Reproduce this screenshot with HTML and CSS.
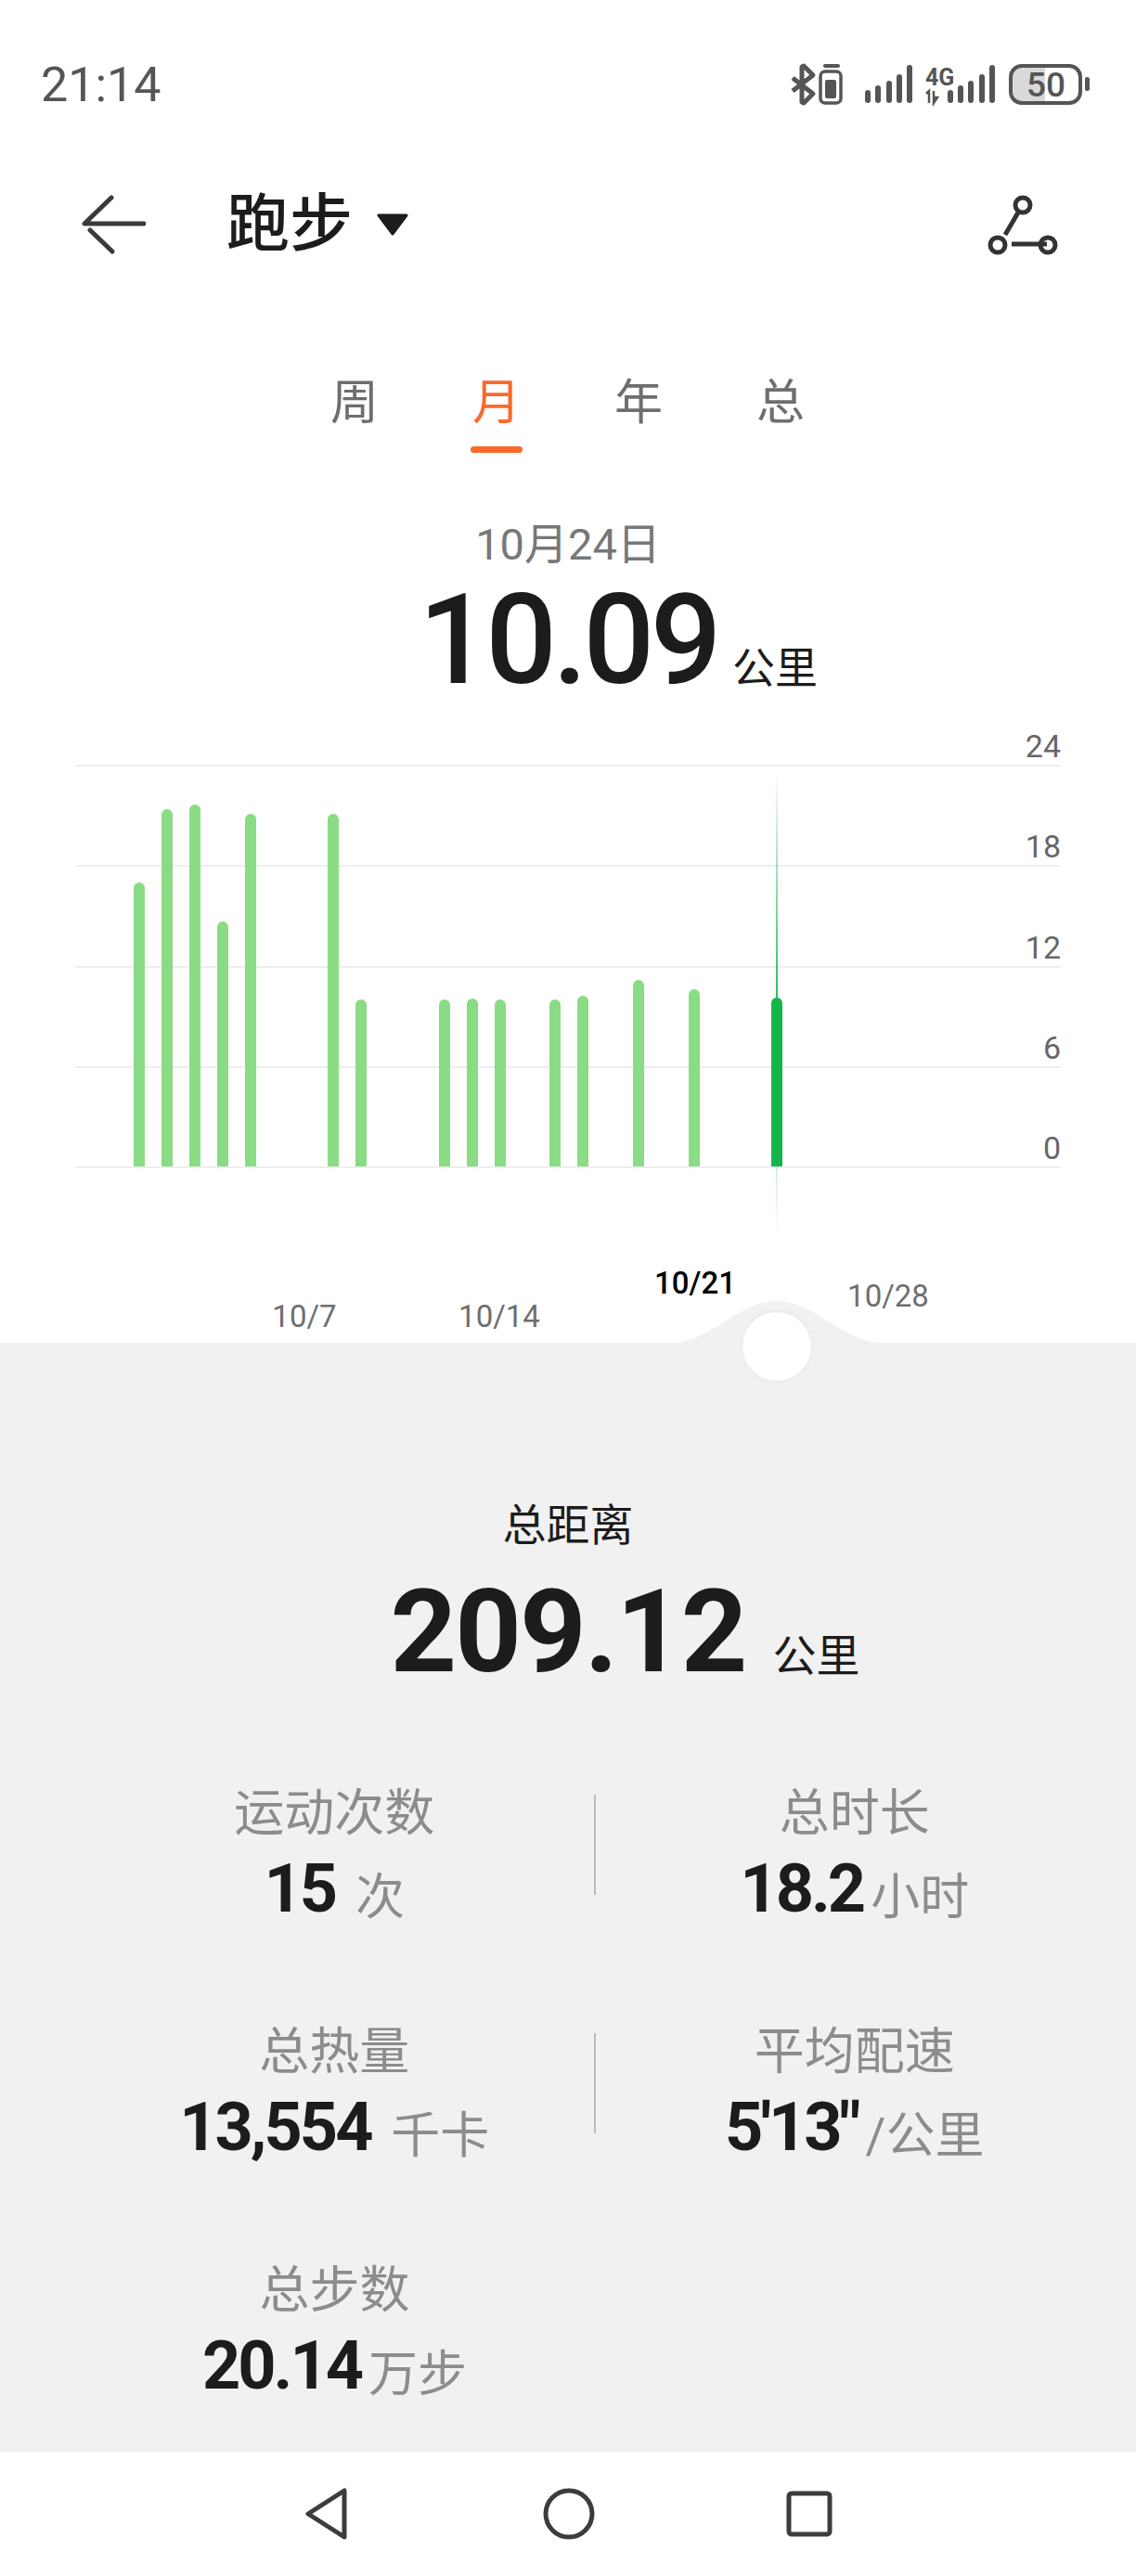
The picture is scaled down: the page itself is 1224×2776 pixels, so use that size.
FILE: index.html
```html
<!DOCTYPE html>
<html lang="zh-CN">
<head>
  <meta charset="UTF-8" />
  <meta name="viewport" content="width=device-width, initial-scale=1" />
  <title>跑步</title>
  <link rel="stylesheet" href="styles.css">
</head>
<body>
  <div class="status-bar">
    <span class="status-time">21:14</span>
    <svg class="status-icons" width="328" height="48" viewBox="0 0 328 48">
      <!-- bluetooth + small battery -->
      <path d="M2 17l22 17-10 10-2-1V5l2-1 10 10L2 31" fill="none" stroke="#555" stroke-width="5" stroke-linejoin="round"/>
      <path d="M37 4h14" stroke="#555" stroke-width="4" stroke-linecap="round"/>
      <rect x="32" y="10" width="22" height="34" rx="5" fill="none" stroke="#555" stroke-width="3.5"/>
      <rect x="37" y="19" width="12" height="20" rx="2" fill="#555"/>
      <!-- signal 1 -->
      <g fill="#555">
        <rect x="80" y="30" width="6" height="14" rx="3"/>
        <rect x="91" y="25" width="6" height="19" rx="3"/>
        <rect x="103" y="20" width="6" height="24" rx="3"/>
        <rect x="114" y="13" width="6" height="31" rx="3"/>
        <rect x="125" y="3" width="6" height="41" rx="3"/>
      </g>
      <!-- signal 2 -->
      <text class="net-label" x="145" y="25">4G</text>
      <path d="M149 44V31l-3 3M154 31v13l4-6h-4" fill="none" stroke="#555" stroke-width="2.5"/>
      <g fill="#555">
        <rect x="169" y="30" width="6" height="14" rx="3"/>
        <rect x="180" y="25" width="6" height="19" rx="3"/>
        <rect x="191" y="20" width="6" height="24" rx="3"/>
        <rect x="203" y="13" width="6" height="31" rx="3"/>
        <rect x="214" y="3" width="6" height="41" rx="3"/>
      </g>
      <!-- battery -->
      <path d="M249 4h25v40h-25a11 11 0 0 1-11-11V15a11 11 0 0 1 11-11z" fill="#d9d9d9"/>
      <rect x="237" y="4" width="75" height="40" rx="12" fill="none" stroke="#555" stroke-width="4"/>
      <rect x="317" y="16" width="5" height="15" rx="2.5" fill="#555"/>
      <text class="battery-label" x="275" y="37">50</text>
    </svg>
  </div>

  <header class="top-bar">
    <svg class="back-icon" width="70" height="64" viewBox="0 0 70 64">
      <path d="M33 3L4 31h64M10 38l24 23" fill="none" stroke="#3a3a3a" stroke-width="5" stroke-linecap="round" stroke-linejoin="round"/>
    </svg>
    <h1 class="page-title">跑步</h1>
    <svg class="title-caret" width="36" height="24" viewBox="0 0 36 24">
      <path d="M3 2h30L18 22z" fill="#1c1c1c" stroke="#1c1c1c" stroke-width="3" stroke-linejoin="round"/>
    </svg>
    <svg class="route-icon" width="76" height="70" viewBox="0 0 76 70">
      <path d="M33 22L19 46M26 56h38" fill="none" stroke="#333" stroke-width="5"/>
      <circle cx="38" cy="14" r="8" fill="none" stroke="#333" stroke-width="5"/>
      <circle cx="11" cy="57" r="8" fill="none" stroke="#333" stroke-width="5"/>
      <circle cx="65" cy="57" r="8" fill="none" stroke="#333" stroke-width="5"/>
    </svg>
  </header>

  <nav class="tabs">
    <span class="tab">周</span>
    <span class="tab active">月</span>
    <span class="tab">年</span>
    <span class="tab">总</span>
  </nav>

  <section class="summary">
    <div class="summary-date">10月24日</div>
    <div class="summary-value"><span class="summary-number">10.09</span><span class="summary-unit">公里</span></div>
  </section>

  <section class="chart">
    <div class="chart-row first"><span>24</span></div>
    <div class="chart-row"><span>18</span></div>
    <div class="chart-row"><span>12</span></div>
    <div class="chart-row"><span>6</span></div>
    <div class="chart-row"><span>0</span></div>
    <div class="chart-bars">
      <i class="bar" style="height:306px"></i>
      <i class="bar" style="height:385px"></i>
      <i class="bar" style="height:390px"></i>
      <i class="bar" style="height:264px"></i>
      <i class="bar" style="height:380px"></i>
      <i></i>
      <i></i>
      <i class="bar" style="height:380px"></i>
      <i class="bar" style="height:180px"></i>
      <i></i>
      <i></i>
      <i class="bar" style="height:180px"></i>
      <i class="bar" style="height:181px"></i>
      <i class="bar" style="height:180px"></i>
      <i></i>
      <i class="bar" style="height:180px"></i>
      <i class="bar" style="height:184px"></i>
      <i></i>
      <i class="bar" style="height:201px"></i>
      <i></i>
      <i class="bar" style="height:191px"></i>
      <i></i>
      <i></i>
      <i class="bar current" style="height:182px"></i>
    </div>
  </section>

  <div class="axis">
    <span class="tick" style="left:328px;top:140px">10/7</span>
    <span class="tick" style="left:538px;top:140px">10/14</span>
    <span class="tick current" style="left:749px;top:104px">10/21</span>
    <span class="tick" style="left:957px;top:118px">10/28</span>
  </div>

  <main class="panel">
    <svg class="panel-bump" width="240" height="46" viewBox="0 0 240 46">
      <path d="M0 46C50 46 78 0 120 0S190 46 240 46z" fill="#f1f1f1"/>
    </svg>
    <div class="panel-knob"></div>

    <div class="total-label">总距离</div>
    <div class="total-value"><span class="total-number">209.12</span><span class="total-unit">公里</span></div>

    <div class="stat-row">
      <div class="stat">
        <div class="stat-label">运动次数</div>
        <div class="stat-value"><b>15</b> <span>次</span></div>
      </div>
      <div class="stat-divider"></div>
      <div class="stat">
        <div class="stat-label">总时长</div>
        <div class="stat-value"><b>18.2</b><span class="close">小时</span></div>
      </div>
    </div>
    <div class="stat-row">
      <div class="stat">
        <div class="stat-label">总热量</div>
        <div class="stat-value"><b>13,554</b> <span>千卡</span></div>
      </div>
      <div class="stat-divider"></div>
      <div class="stat">
        <div class="stat-label">平均配速</div>
        <div class="stat-value"><b>5'13"</b><span class="close">/公里</span></div>
      </div>
    </div>
    <div class="stat-row">
      <div class="stat">
        <div class="stat-label">总步数</div>
        <div class="stat-value"><b>20.14</b><span class="close">万步</span></div>
      </div>
    </div>
  </main>

  <footer class="nav-bar">
    <svg width="46" height="56" viewBox="0 0 46 56">
      <path d="M42 3v50L3 28z" fill="none" stroke="#3c3c3c" stroke-width="5" stroke-linejoin="round"/>
    </svg>
    <svg class="nav-home" width="56" height="56" viewBox="0 0 56 56">
      <circle cx="28" cy="28" r="25" fill="none" stroke="#3c3c3c" stroke-width="5"/>
    </svg>
    <svg width="50" height="50" viewBox="0 0 50 50">
      <rect x="3" y="3" width="44" height="44" rx="3" fill="none" stroke="#3c3c3c" stroke-width="5"/>
    </svg>
  </footer>
</body>
</html>
```

FILE: styles.css
```css
* {
  box-sizing: border-box;
}
body {
  margin: 0;
  width: 1224px;
  height: 2776px;
  overflow: hidden;
  background: #ffffff;
  color: #1c1c1c;
  font-family: Roboto, "Noto Sans CJK SC", sans-serif;
}
.status-bar {
  height: 182px;
  padding: 0 44px 0 44px;
  display: flex;
  justify-content: space-between;
  align-items: center;
}
.status-time {
  font-size: 52px;
  color: #555;
}
.status-icons {
  overflow: visible;
}
.net-label {
  font-size: 25px;
  font-weight: 700;
  fill: #555;
}
.battery-label {
  font-size: 37px;
  font-weight: 500;
  fill: #555;
  text-anchor: middle;
}

.top-bar {
  height: 120px;
  padding: 0 84px 0 87px;
  display: flex;
  align-items: center;
}
.page-title {
  margin: 0 0 0 87px;
  font-size: 68px;
  line-height: 80px;
  font-weight: 500;
}
.title-caret {
  margin-left: 25px;
}
.route-icon {
  margin-left: auto;
}

.tabs {
  margin-top: 103px;
  margin-left: -1px;
  display: flex;
  justify-content: center;
  gap: 101px;
}
.tab {
  position: relative;
  width: 52px;
  font-size: 52px;
  line-height: 60px;
  color: #6e6e6e;
  text-align: center;
}
.tab.active {
  color: #f96a2b;
}
.tab.active::after {
  content: "";
  position: absolute;
  left: -2px;
  right: -2px;
  top: 76px;
  height: 7px;
  border-radius: 4px;
  background: #f96a2b;
}

.summary {
  margin-top: 92px;
  text-align: center;
}
.summary-date {
  font-size: 47px;
  line-height: 60px;
  color: #777;
}
.summary-value {
  margin-top: 8px;
  display: grid;
  grid-template-columns: 1fr auto 1fr;
  align-items: baseline;
  line-height: 130px;
}
.summary-number {
  grid-column: 2;
  font-size: 135px;
  font-weight: 500;
  letter-spacing: -4.5px;
}
.summary-unit {
  font-size: 46px;
  margin-left: 16px;
  text-align: left;
}

.chart {
  position: absolute;
  left: 81px;
  top: 780px;
  width: 1062px;
}
.chart-row {
  height: 108.25px;
  display: flex;
  justify-content: flex-end;
  align-items: flex-end;
  border-bottom: 2px solid #eeeeee;
  font-size: 34px;
  line-height: 40px;
  color: #666;
}
.chart-row.first {
  height: 46px;
}
.chart-bars {
  position: absolute;
  left: 54px;
  bottom: 2px;
  display: grid;
  grid-template-columns: repeat(31, 29.9px);
  align-items: end;
}
.bar {
  position: relative;
  justify-self: center;
  width: 12px;
  border-radius: 6px 6px 0 0;
  background: #8adc84;
}
.bar.current {
  background: #14b64b;
}
.bar.current::before,
.bar.current::after {
  content: "";
  position: absolute;
  left: 5px;
  width: 2px;
}
.bar.current::before {
  bottom: 100%;
  height: 246px;
  background: linear-gradient(to bottom, rgba(20, 182, 75, 0), rgba(20, 182, 75, 0.9));
}
.bar.current::after {
  top: 100%;
  height: 76px;
  background: linear-gradient(to bottom, rgba(20, 182, 75, 0.2), rgba(20, 182, 75, 0));
}

.axis {
  position: absolute;
  left: 0;
  top: 1259px;
  width: 1224px;
  height: 188px;
}
.tick {
  position: absolute;
  transform: translateX(-50%);
  font-size: 33px;
  line-height: 40px;
  color: #6e6e6e;
}
.tick.current {
  color: #000;
  font-weight: 500;
}

.panel {
  position: absolute;
  left: 0;
  top: 1447px;
  width: 1224px;
  height: 1195px;
  padding: 167px 24px 0 81px;
  background: #f1f1f1;
}
.panel-bump {
  position: absolute;
  left: 717px;
  top: -45px;
}
.panel-knob {
  position: absolute;
  left: 800px;
  top: -33px;
  width: 74px;
  height: 74px;
  border-radius: 50%;
  background: #fff;
  box-shadow: 0 0 6px rgba(0, 0, 0, 0.05);
}
.total-label {
  margin-left: -57px;
  font-size: 47px;
  line-height: 60px;
  text-align: center;
}
.total-value {
  margin-top: 20px;
  margin-left: -57px;
  display: grid;
  grid-template-columns: 1fr auto 1fr;
  align-items: baseline;
  line-height: 130px;
}
.total-number {
  grid-column: 2;
  font-size: 125px;
  font-weight: 700;
  letter-spacing: -2px;
}
.total-unit {
  font-size: 47px;
  margin-left: 29px;
}
.stat-row {
  height: 257px;
  display: flex;
  align-items: flex-start;
}
.total-value + .stat-row {
  margin-top: 75px;
}
.stat {
  width: 559px;
  text-align: center;
}
.stat-label {
  font-size: 54px;
  line-height: 60px;
  color: #8c8c8c;
}
.stat-value {
  margin-top: 11px;
  font-size: 72px;
  line-height: 80px;
  white-space: nowrap;
}
.stat-value b {
  font-weight: 700;
  letter-spacing: -3px;
}
.stat-value span {
  margin-left: 4px;
  font-size: 53px;
  color: #8c8c8c;
  vertical-align: -3px;
}
.stat-value span.close {
  margin-left: 8px;
}
.stat-divider {
  flex: none;
  width: 2px;
  height: 108px;
  margin-top: 9px;
  background: #bdbdbd;
}

.nav-bar {
  position: absolute;
  left: 0;
  top: 2642px;
  width: 1224px;
  height: 134px;
  padding-left: 329px;
  display: flex;
  align-items: center;
  gap: 208px;
  background: #fff;
}
.nav-home {
  margin: 0 -2px 0 2px;
}
```
